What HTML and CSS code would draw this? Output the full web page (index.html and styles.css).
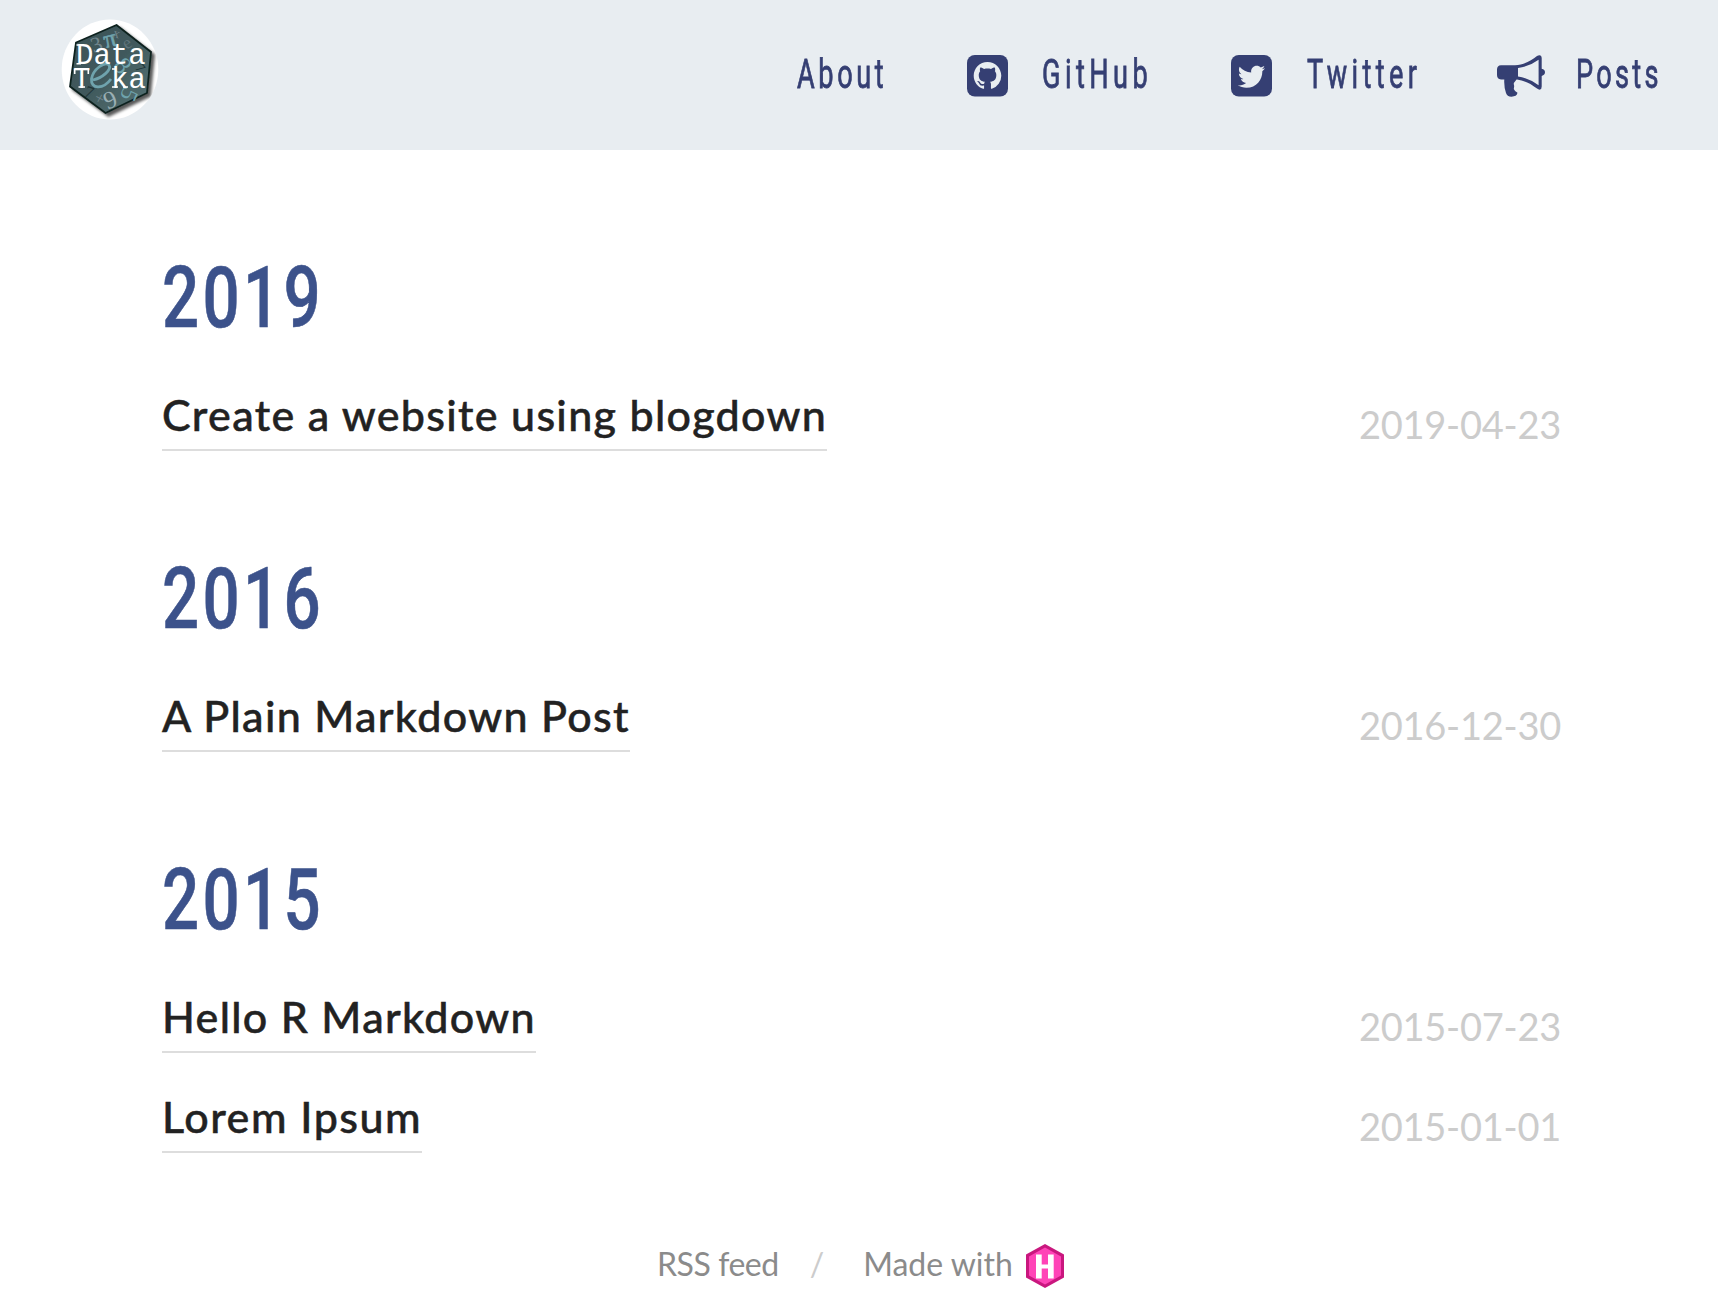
FILE: index.html
```html
<!DOCTYPE html>
<html lang="en">
<head>
<meta charset="utf-8">
<title>Posts</title>
<link rel="stylesheet" href="styles.css">
</head>
<body>
<header class="header">
  <a class="logo" aria-label="DataTeka">
    <svg width="120" height="120" viewBox="0 0 120 120">
      <defs>
        <linearGradient id="hex" x1="0" y1="0" x2="1" y2="1">
          <stop offset="0" stop-color="#3c5357"/><stop offset=".5" stop-color="#40595c"/><stop offset="1" stop-color="#587577"/>
        </linearGradient>
        <filter id="shade" x="-20%" y="-20%" width="150%" height="150%"><feDropShadow dx="3" dy="3" stdDeviation="1.8" flood-color="#000" flood-opacity=".65"/></filter>
        <clipPath id="disc"><ellipse cx="60" cy="59.5" rx="48.3" ry="50"/></clipPath>
      </defs>
      <ellipse cx="60" cy="59.5" rx="48.3" ry="50" fill="#fff"/>
      <g clip-path="url(#disc)"><path d="M66.5 15 101 42 97 83 55.5 103 20 76.500 26 32.500Z" fill="url(#hex)" stroke="#0c201f" stroke-width="1.8" filter="url(#shade)"/></g>
      <g class="logo-glyphs">
        <text x="54" y="37" font-size="25" stroke="#6fa3ad" stroke-width=".6" transform="rotate(-15 60 31)">π</text>
        <text x="41" y="42" font-size="22" fill="#71858c" transform="rotate(-20 46 35)">3</text>
        <text x="63" y="28" font-size="14" fill="#71858c" transform="rotate(15 67 24)">x</text>
        <text x="73" y="38" font-size="18" fill="#5f747a" transform="rotate(-35 78 33)">e</text>
        <text x="67" y="64" font-size="25" transform="rotate(52 73 55)">8</text>
        <text x="71" y="92" font-size="24" transform="rotate(115 78 85)">5</text>
        <text x="54" y="98" font-size="25" fill="#9aafb4" transform="rotate(-22 60 90)">9</text>
        <text x="45" y="94" font-size="17" fill="#71858c" transform="rotate(30 50 88)">+</text>
        <text x="35" y="88" font-size="17" fill="#1d3336" transform="rotate(20 40 82)">7</text>
        <text x="87" y="63" font-size="14" fill="#1d3336" transform="rotate(50 91 58)">7</text>
        <path class="swirl" d="M43 70C52 68 62 60 59 55C55 51 43 59 41.500 69C40.500 79 53 80 61 69"/>
      </g>
      <g class="logo-name">
        <text x="26" y="54.300">Data</text><text x="23" y="77.500">T</text><text x="61" y="77.500">ka</text>
        <path d="M26.500 35H31M26.500 53.800H31M24.700 59v5M38.300 59v5M28.500 77H35M62 77h6M73 77h5M62 59h4"/>
      </g>
    </svg>
  </a>
  <nav class="nav">
    <a class="item about"><span class="label">About</span></a>
    <a class="item github">
      <svg width="41" height="42" viewBox="0 0 41 42"><rect width="41" height="41.500" rx="7.800"/><path class="cut" transform="translate(6.700 6.900) scale(1.725)" d="M8 0C3.580 0 0 3.580 0 8c0 3.540 2.290 6.530 5.470 7.590.4.070.55-.17.55-.38 0-.19-.01-.82-.01-1.490-2.010.37-2.530-.49-2.690-.94-.09-.23-.48-.94-.82-1.130-.28-.15-.68-.52-.01-.53.63-.01 1.080.58 1.230.82.72 1.210 1.870.87 2.330.66.070-.52.28-.87.51-1.070-1.780-.2-3.640-.89-3.640-3.950 0-.87.31-1.590.82-2.150-.08-.2-.36-1.020.08-2.120 0 0 .67-.21 2.200.82.64-.18 1.320-.27 2-.27.68 0 1.360.09 2 .27 1.530-1.040 2.200-.82 2.200-.82.44 1.100.16 1.920.08 2.120.51.56.82 1.270.82 2.150 0 3.070-1.870 3.750-3.650 3.950.29.25.54.73.54 1.480 0 1.070-.01 1.930-.01 2.200 0 .21.15.46.55.38A8.013 8.013 0 0 0 16 8c0-4.420-3.580-8-8-8z"/></svg>
      <span class="label">GitHub</span></a>
    <a class="item twitter">
      <svg width="41" height="42" viewBox="0 0 41 42"><rect width="41" height="41.500" rx="7.800"/><path class="cut" transform="translate(6.800 8.100) scale(.0533)" d="M459.370 151.716c.325 4.548.325 9.097.325 13.645 0 138.720-105.583 298.558-298.558 298.558-59.452 0-114.680-17.219-161.137-47.106 8.447.974 16.568 1.299 25.340 1.299 49.055 0 94.213-16.568 130.274-44.832-46.132-.975-84.792-31.188-98.112-72.772 6.498.974 12.995 1.624 19.818 1.624 9.421 0 18.843-1.300 27.614-3.573-48.081-9.747-84.143-51.980-84.143-102.985v-1.299c13.969 7.797 30.214 12.670 47.431 13.319-28.264-18.843-46.781-51.005-46.781-87.391 0-19.492 5.197-37.360 14.294-52.954 51.655 63.675 129.300 105.258 216.365 109.807-1.624-7.797-2.599-15.918-2.599-24.040 0-57.828 46.782-104.934 104.934-104.934 30.213 0 57.502 12.670 76.670 33.137 23.715-4.548 46.456-13.320 66.599-25.340-7.798 24.366-24.366 44.833-46.132 57.827 21.117-2.273 41.584-8.122 60.426-16.243-14.292 20.791-32.161 39.308-52.628 54.253z"/></svg>
      <span class="label">Twitter</span></a>
    <a class="item posts">
      <svg width="48" height="42" viewBox="0 0 48 42"><path fill-rule="evenodd" d="M4 10.300H18C27 10 34 5.500 40 1Q42 -.2 43.500.4Q44.700 1 44.700 3V13.800Q48 14.500 48 17.300T44.700 20.900V31.500Q44.700 34 43 34.600Q41.600 34.800 40 33.500C33 28 27 25.500 20 24.500Q19 24.600 18.800 25.500L16.800 28Q16.700 29.500 17.200 31L16.800 34Q17.500 36 20.500 37.800Q19.800 41.600 14.500 41.700Q10 41.500 9 38Q6.800 31.500 7.300 24.500H4Q0 24 0 20V14.500Q0 10.500 4 10.300ZM21 12.900V21.500Q31.500 23 41.600 30.300V4.700Q31.500 12 21 12.900Z"/></svg>
      <span class="label">Posts</span></a>
  </nav>
</header>
<main class="list">
  <section class="year">
    <h1><span>2019</span></h1>
    <article><a class="title">Create a website using blogdown</a><time>2019-04-23</time></article>
  </section>
  <section class="year">
    <h1><span>2016</span></h1>
    <article><a class="title">A Plain Markdown Post</a><time>2016-12-30</time></article>
  </section>
  <section class="year">
    <h1><span>2015</span></h1>
    <article><a class="title">Hello R Markdown</a><time>2015-07-23</time></article>
    <article><a class="title short">Lorem Ipsum</a><time>2015-01-01</time></article>
  </section>
</main>
<footer class="footer">
  <a class="rss">RSS feed</a><span class="slash">/</span><a>Made with</a>
  <svg width="38" height="44" viewBox="0 0 38 44"><path d="M19 0 38 10.500V33.500L19 44 0 33.500V10.500Z" fill="#c9177e"/><path d="M19 3.500 35 12.400V31.600L19 40.500 3 31.600V12.400Z" fill="#ff44b7"/><path d="M10 10.500H15.700V20.500H22V10.500H27.700V34.500H22V24.500H15.700V34.500H10Z" fill="#fff"/></svg>
</footer>
</body>
</html>
```
FILE: styles.css
```css
* { box-sizing: border-box; }
body { margin: 0; background: #fff; color: #222; font-family: Lato, sans-serif; }
.header { height: 150px; background: #e8edf1; display: flex; justify-content: space-between; align-items: flex-start; }
.logo { display: block; margin: 10px 0 0 50px; }
.logo svg { display: block; }
.logo-glyphs { font-family: "Liberation Serif", serif; fill: #6fa3ad; font-weight: 400; }
.logo-glyphs .swirl { fill: none; stroke: #6fa3ad; stroke-width: 2.8; }
.logo-name { font-family: "Liberation Mono", monospace; font-size: 29px; fill: #fff; }
.logo-name path { stroke: #fff; stroke-width: 1.6; fill: none; }
.nav { display: flex; margin: 49px 59px 0 0; color: #353f73; font: 400 40.500px/54px Roboto, sans-serif; }
.item { display: flex; }
.item svg { display: block; flex: none; margin-top: 6px; fill: #353f73; }
.item .cut { fill: #e8edf1; }
.label { display: block; margin-top: -2px; white-space: nowrap; transform-origin: 0 50%; transform: scaleX(.67); letter-spacing: 5.400px; -webkit-text-stroke: .8px #353f73; }
.about { width: 170px; }
.github { width: 264px; }
.twitter { width: 266px; }
.posts { width: 162px; }
.github .label { margin-left: 34px; letter-spacing: 6.600px; }
.twitter .label { margin-left: 35px; letter-spacing: 6.500px; }
.posts .label { margin-left: 31px; letter-spacing: 4.900px; }
.list { margin-top: -1px; padding: 0 157px 0 162px; }
.year { padding-top: 104px; }
h1 { margin: 0; height: 97px; color: #3c528b; font: 500 86px/90px Roboto, sans-serif; }
h1 span { display: inline-block; transform-origin: 0 50%; transform: scaleX(.76); letter-spacing: 4.400px; -webkit-text-stroke: .6px #3c528b; }
article { height: 100px; padding-top: 38px; display: flex; justify-content: space-between; align-items: flex-start; }
.title { height: 63px; border-bottom: 2px solid #ddd; font-size: 43px; line-height: 54px; font-weight: 500; letter-spacing: 1.310px; white-space: nowrap; -webkit-text-stroke: .5px #222; }
.short { letter-spacing: 1.500px; }
time { font-size: 38px; line-height: 50px; margin-top: 11px; color: #ccc; letter-spacing: -.25px; }
.footer { display: flex; align-items: flex-start; margin: 92px 0 0 657px; font-size: 32px; line-height: 40px; color: #8b8b8b; white-space: nowrap; }
.rss { letter-spacing: -.45px; }
.slash { margin: 0 39px 0 31px; color: #ccc; }
.footer svg { margin-left: 13px; }
```
